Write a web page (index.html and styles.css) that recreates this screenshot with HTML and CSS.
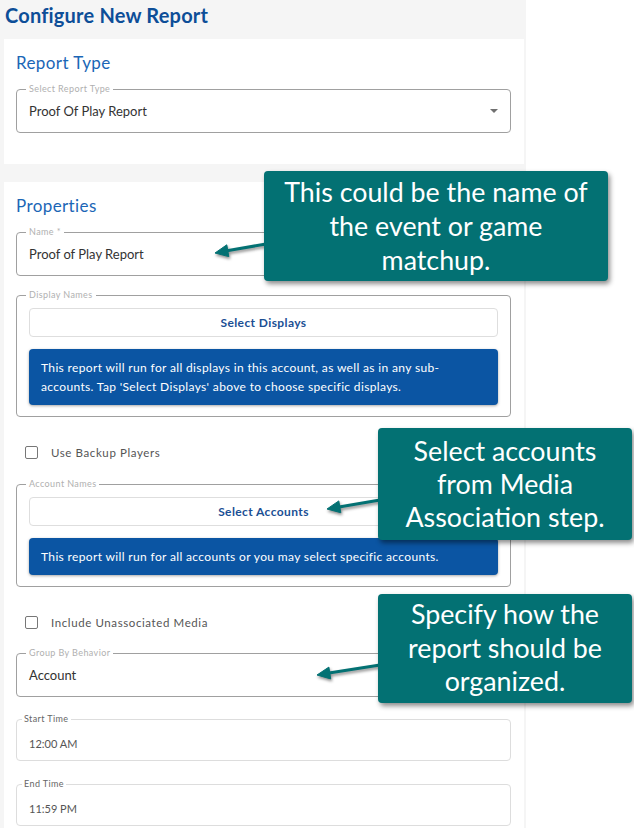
FILE: index.html
```html
<!DOCTYPE html>
<html lang="en">
<head>
<meta charset="utf-8">
<title>Configure New Report</title>
<link rel="stylesheet" href="styles.css">
</head>
<body>
<div class="page">
  <h1 class="page-title">Configure New Report</h1>

  <section class="card">
    <h2 class="card-title">Report Type</h2>
    <fieldset class="field">
      <legend>Select Report Type</legend>
      <div class="value select"><span>Proof Of Play Report</span><span class="caret"></span></div>
    </fieldset>
  </section>

  <section class="card card-props">
    <h2 class="card-title">Properties</h2>
    <fieldset class="field">
      <legend>Name *</legend>
      <div class="value">Proof of Play Report</div>
    </fieldset>

    <fieldset class="field group">
      <legend>Display Names</legend>
      <button class="pick" type="button">Select Displays</button>
      <div class="note">This report will run for all displays in this account, as well as in any sub-<br>accounts. Tap 'Select Displays' above to choose specific displays.</div>
    </fieldset>

    <label class="check"><span class="box"></span>Use Backup Players</label>

    <fieldset class="field group">
      <legend>Account Names</legend>
      <button class="pick" type="button">Select Accounts</button>
      <div class="note">This report will run for all accounts or you may select specific accounts.</div>
    </fieldset>

    <label class="check check-last"><span class="box"></span>Include Unassociated Media</label>

    <fieldset class="field">
      <legend>Group By Behavior</legend>
      <div class="value select"><span>Account</span><span class="caret"></span></div>
    </fieldset>

    <fieldset class="field time">
      <legend>Start Time</legend>
      <div class="value">12:00 AM</div>
    </fieldset>

    <fieldset class="field time time-end">
      <legend>End Time</legend>
      <div class="value">11:59 PM</div>
    </fieldset>
  </section>

  <svg class="arrows" width="634" height="828" viewBox="0 0 634 828" aria-hidden="true">
    <g fill="#037173" stroke="#037173">
      <line x1="266" y1="244" x2="227" y2="250.8" stroke-width="3"/>
      <polygon points="215,253 226.8,244.8 228.8,256.6" stroke-width="1"/>
      <line x1="380" y1="500" x2="339" y2="507" stroke-width="3"/>
      <polygon points="327,509 338.8,500.9 340.8,512.7" stroke-width="1"/>
      <line x1="380" y1="665" x2="329" y2="673.1" stroke-width="3"/>
      <polygon points="317,675 328.9,667.1 330.7,678.9" stroke-width="1"/>
    </g>
  </svg>

  <div class="callout c1"><p>This could be the name of<br>the event or game<br>matchup.</p></div>
  <div class="callout c2"><p>Select accounts<br>from Media<br>Association step.</p></div>
  <div class="callout c3"><p>Specify how the<br>report should be<br>organized.</p></div>
</div>
</body>
</html>
```

FILE: styles.css
```css
* { box-sizing: border-box; }

body {
  margin: 0;
  background: #ffffff;
  font-family: Lato, "Open Sans", "Liberation Sans", sans-serif;
}

.page {
  position: relative;
  width: 526px;
  min-height: 828px;
  padding: 0 2px 0 4px;
  background: #f5f5f5;
}

.page-title {
  margin: 0;
  height: 39px;
  padding: 3px 0 0 1px;
  font-size: 20px;
  line-height: 24px;
  font-weight: 700;
  color: #0d4e98;
  letter-spacing: 0.2px;
}

.card {
  background: #ffffff;
  padding: 14px 13px 31px 12px;
}

.card + .card { margin-top: 18px; }

.card-title {
  margin: 0 0 11px;
  font-size: 17px;
  line-height: 20px;
  font-weight: 400;
  color: #1b66b6;
  letter-spacing: 0.4px;
}

.field {
  margin: 0;
  min-width: 0;
  padding: 0 12px;
  border: 1px solid #a0a0a0;
  border-radius: 4px;
}

.field legend {
  margin-left: -3px;
  padding: 0 3px;
  font-size: 9px;
  line-height: 10px;
  color: #b0b0b0;
  letter-spacing: 0.4px;
}

.value {
  padding: 9px 0 13px;
  font-size: 13px;
  line-height: 16px;
  color: #333333;
  letter-spacing: 0;
}

.select {
  display: flex;
  justify-content: space-between;
  align-items: center;
}

.caret {
  width: 0;
  height: 0;
  border-left: 4px solid transparent;
  border-right: 4px solid transparent;
  border-top: 4px solid #707070;
}

.field + .field.group { margin-top: 14px; }

.group { padding: 8px 12px 11px; }

.pick {
  display: block;
  width: 100%;
  height: 29px;
  padding: 0;
  border: 1px solid #dedede;
  border-radius: 4px;
  background: #ffffff;
  font-family: Lato, "Open Sans", sans-serif;
  font-size: 12px;
  font-weight: 700;
  color: #1b4f94;
  letter-spacing: 0.4px;
}

.note {
  margin-top: 12px;
  padding: 9px 12px;
  border-radius: 4px;
  background: #0b55a3;
  color: #ffffff;
  font-size: 12px;
  line-height: 19px;
  letter-spacing: 0.35px;
  box-shadow: 0 1px 3px rgba(0, 0, 0, 0.35);
}

.check {
  display: flex;
  align-items: center;
  gap: 13px;
  height: 20px;
  margin: 25px 0 17px;
  padding-left: 9px;
  font-size: 11.5px;
  color: #555555;
  letter-spacing: 0.6px;
}

.check-last { margin: 25px 0 16px; }

.box {
  width: 13px;
  height: 13px;
  border: 1.5px solid #777777;
  border-radius: 2px;
}

.time {
  margin-top: 17px;
  border-color: #dddddd;
}

.time-end { margin-top: 18px; }

.time legend {
  margin-left: -7px;
  padding: 0 2px;
  color: #666666;
}

.time .value {
  padding: 12px 0 8px;
  font-size: 11px;
  color: #555555;
}

.arrows {
  position: absolute;
  left: 0;
  top: 0;
  pointer-events: none;
  filter: drop-shadow(1px 2px 1.5px rgba(0, 0, 0, 0.45));
}

.callout {
  position: absolute;
  display: flex;
  align-items: center;
  justify-content: center;
  border-radius: 4px;
  background: #037173;
  box-shadow: 2px 3px 5px rgba(0, 0, 0, 0.45);
  color: #ffffff;
  text-align: center;
  font-family: Lato, "Open Sans", sans-serif;
  font-size: 26.8px;
  line-height: 34px;
}

.callout p { margin: 0; }

.c1 { left: 264px; top: 171px; width: 344px; height: 110px; }
.c2 { left: 378px; top: 428px; width: 254px; height: 112px; line-height: 33px; }
.c3 { left: 378px; top: 594px; width: 254px; height: 109px; line-height: 33.5px; }
```
